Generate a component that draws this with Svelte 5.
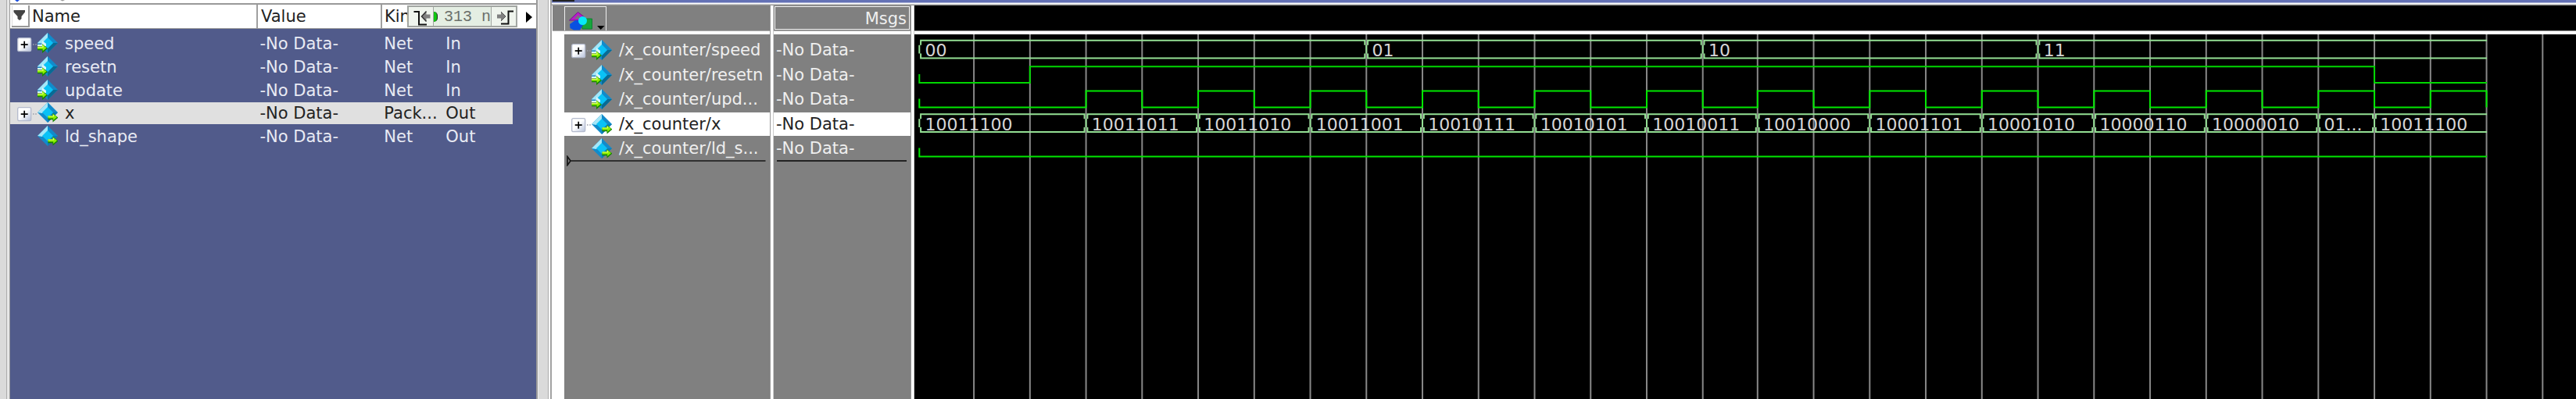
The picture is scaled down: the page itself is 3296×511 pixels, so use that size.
<script>
  const signals = [
    { name: 'speed', kind: 'Net', mode: 'In', bus: true, short: '/x_counter/speed' },
    { name: 'resetn', kind: 'Net', mode: 'In', short: '/x_counter/resetn' },
    { name: 'update', kind: 'Net', mode: 'In', short: '/x_counter/upd...' },
    { name: 'x', kind: 'Pack...', mode: 'Out', bus: true, selected: true, short: '/x_counter/x' },
    { name: 'ld_shape', kind: 'Net', mode: 'Out', short: '/x_counter/ld_s...' }
  ];

  // Wave area coordinates: x origin is the left edge of the black canvas.
  const start = 6.3;
  const tick = (n) => (n <= 13 ? 76.1 + n * 71.74 : 1078.8 + (n - 14) * 71.75);
  const grid = Array.from({ length: 29 }, (_, n) => tick(n));
  const end = tick(27) + 0.5;

  const bus = (top, changes) => {
    const b = top + 22.7;
    const edges = [start, ...changes.map(tick)];
    let d = '';
    edges.forEach((x, i) => {
      const l = x + 1.8;
      const r = i + 1 < edges.length ? edges[i + 1] - 2 : end;
      d += `M${l} ${top + 6}V${top}H${r}`;
      if (i + 1 < edges.length) d += `V${top + 6}M${r} ${b - 6}V${b}`;
      else d += `M${r} ${b}`;
      d += `H${l}V${b - 6}M${x} ${top + 6}V${b - 6}`;
    });
    return d;
  };

  const speedEdges = [7, 13, 19];
  const speedValues = ['00', '01', '10', '11'];
  const xEdges = [2, 4, 6, 8, 10, 12, 14, 16, 18, 20, 22, 24, 25];
  const xValues = ['10011100', '10011011', '10011010', '10011001', '10010111', '10010101', '10010011',
    '10010000', '10001101', '10001010', '10000110', '10000010', '01...', '10011100'];
  const labelX = (edges, i) => (i === 0 ? start : tick(edges[i - 1])) + 7.2;

  let update = `M${start} 82.5V93.5`;
  for (let n = 2; n <= 26; n += 2) update += `H${tick(n)}V72.5H${tick(n + 1)}V93.5`;
  const resetn = `M${start} 51V62H${tick(1)}V41.2H${tick(25)}V62H${end}`;
</script>

{#snippet port(mode)}
  <svg class="port" viewBox="0 0 26 26">
    <path d="M13 0L26 13L13 26L0 13Z" fill="#118bcb" />
    <path d="M13 0L13 7L6 14L0 13Z" fill="#a5e7f8" />
    <path d="M26 13L13 26L13 20L20 13Z" fill={mode === 'In' ? '#086b94' : '#0c7cb4'} />
    <path d="M13 6L20 13L13 20L6 13Z" fill="#0ac2f6" />
    {#if mode === 'In'}
      <path d="M0 13H6V10L11 14V17H0Z" fill="#d9f6fc" />
      <path d="M0 14.2H5.5" stroke="#1480c0" stroke-width="1.5" />
      <g transform="translate(0 13.8)">
        <path d="M0 4H6V0.5L13 6.3L6 12.2V8.5H0Z" fill="#168400" />
        <path d="M0 4H6V1L11.5 5.5L6.7 9.5V7H0Z" fill="#8cf000" />
        <path d="M0 4.6H7V2.5" stroke="#e0ff60" stroke-width="1.2" fill="none" />
      </g>
    {:else}
      <g transform="translate(13.500 13.4)">
        <path d="M0 4H6V0.5L13 6.3L6 12.2V8.8H0Z" fill="#168400" />
        <path d="M0 4H6V1L11.5 5.5L6.7 9.5V7H0Z" fill="#8cf000" />
        <path d="M0 4.6H7V2.5" stroke="#e0ff60" stroke-width="1.2" fill="none" />
      </g>
    {/if}
  </svg>
{/snippet}

{#snippet expander(show)}
  <span class="exp">
    {#if show}
      <svg viewBox="0 0 26 19">
        <defs>
          <linearGradient id="boxfill" x1="0" y1="0" x2="1" y2="1">
            <stop offset="0.45" stop-color="#fff" />
            <stop offset="1" stop-color="#b5c0da" />
          </linearGradient>
        </defs>
        <rect x="0.7" y="0.7" width="17" height="17" rx="1.8" fill="url(#boxfill)" stroke="#b4bbcd" stroke-width="1.3" />
        <path d="M4.7 9.2H13.7M9.2 4.7V13.7" stroke="#000" stroke-width="1.7" />
        <path d="M20 9H26" stroke="#9c9fac" stroke-width="1.5" stroke-dasharray="1.6 1.6" />
      </svg>
    {/if}
  </span>
{/snippet}

<div class="app">
  <div class="gutter"></div>
  <section class="objects">
    <div class="strip"><svg viewBox="0 0 80 4"><path d="M6 0H12L9 2.500Z" fill="#1c50e0" /><path d="M64 0H70L67 1.4Z" fill="#999" /></svg></div>
    <header class="ohead">
      <div class="sort"><svg viewBox="0 0 20 26"><path d="M2.500 6H17V8.500L12.500 14V17L10 19L7.500 17V14L2.500 8.500Z" fill="#444" /></svg></div>
      <div class="h name">Name</div>
      <div class="h value">Value</div>
      <div class="h kind">Kind</div>
      <div class="time">
        <span class="btn"><svg viewBox="0 0 32 26"><path d="M6.500 7H13V23.5H23" stroke="#111" stroke-width="2" fill="none" /><path d="M16.5 13L22.5 6.5V10.5H27.5V15.5H22.5V19.5Z" fill="#808080" /><path d="M22.5 6.5L16.5 13L22.5 19.5" stroke="#333" stroke-width="1.5" fill="none" /></svg></span>
        <span class="now"><i></i><b>313 n</b></span>
        <span class="btn"><svg viewBox="0 0 32 26"><path d="M12 22.5H21.5V6.5H28" stroke="#111" stroke-width="2" fill="none" /><path d="M18 13L12 7V10.5H7V15.5H12V19Z" fill="#808080" /><path d="M12 7L18 13L12 19" stroke="#555" stroke-width="1" fill="none" /></svg></span>
      </div>
      <svg class="next" viewBox="0 0 8 14"><path d="M0 0L8 7L0 14Z" fill="#000" /></svg>
    </header>
    <div class="orows">
      {#each signals as s}
        <div class="orow" class:selected={s.selected}>
          {@render expander(s.bus)}
          {@render port(s.mode)}
          <span class="name">{s.name}</span>
          <span class="value">-No Data-</span>
          <span class="kind">{s.kind}</span>
          <span>{s.mode}</span>
        </div>
      {/each}
    </div>
  </section>
  <div class="splitter"></div>

  <section class="wave">
    <div class="title"><span></span></div>
    <div class="panes">
      <div class="names">
        <div class="tools">
          <div class="tool">
            <svg viewBox="0 0 52 31">
              <path d="M5.5 17L16.5 6.5L26 14L20 17Z" fill="#b81cc8" stroke="#7a1090" stroke-width="1" />
              <path d="M12 15L17 10L20 15Z" fill="#777" />
              <path d="M21 15H34.5V28H22Z" fill="#16a63c" stroke="#108030" stroke-width="1" />
              <path d="M6 22L13 17H19L23 23L19 29.5H11L6.5 27Z" fill="#0a50e0" />
              <circle cx="22.5" cy="17.5" r="5.5" fill="#08e8f8" />
              <path d="M41 24H50.5L45.7 29Z" fill="#000" />
            </svg>
          </div>
        </div>
        <div class="wrows">
          {#each signals as s}
            <div class="wrow" class:selected={s.selected}>
              {@render expander(s.bus)}
              {@render port(s.mode)}
              <span>{s.short}</span>
            </div>
          {/each}
          <svg class="insert" viewBox="0 0 256 14"><path d="M1 1.5V12.5L5 7ZM5 7H254.500" stroke="#161616" stroke-width="1.7" fill="none" /></svg>
        </div>
      </div>
      <div class="sash"></div>
      <div class="msgs">
        <div class="mhead"><span>Msgs</span></div>
        <div class="mrows">
          {#each signals as s}
            <div class="wrow" class:selected={s.selected}><span>-No Data-</span></div>
          {/each}
          <div class="rule"></div>
        </div>
      </div>
      <div class="sash"></div>
      <div class="plot">
        <div class="ruler"></div>
        <svg class="canvas" width="2126" height="467" viewBox="0 0 2126 467">
          {#each grid as x}
            <path d="M{x} 0V467" stroke="#888" stroke-width="2" />
          {/each}
          <g fill="none" stroke-width="2">
            <path d={bus(7.7, speedEdges)} stroke="#94e094" />
            <path d={resetn} stroke="#00d800" />
            <path d={update} stroke="#00e800" />
            <path d={bus(102.3, xEdges)} stroke="#94e094" />
            <path d="M{start} 145.500V156.500H{end}" stroke="#00e800" />
          </g>
          {#each speedValues as v, i}
            <text x={labelX(speedEdges, i)} y="28">{v}</text>
          {/each}
          {#each xValues as v, i}
            <text x={labelX(xEdges, i)} y="122.500">{v}</text>
          {/each}
        </svg>
      </div>
    </div>
  </section>
</div>

<style>
  :global(body) { margin: 0; overflow: hidden; }
  .app {
    display: flex;
    width: 3296px;
    height: 511px;
    overflow: hidden;
    background: #dadada;
    font: 21px/30px "DejaVu Sans", sans-serif;
    white-space: nowrap;
  }
  .app * { box-sizing: border-box; }
  svg { display: block; }
  .gutter { flex: none; width: 12px; background: linear-gradient(90deg, #dadada 8px, #acacac 8px 9.500px, #e6e6e6 9.500px); }
  .objects { flex: none; width: 676px; display: flex; flex-direction: column; border: solid #999; border-width: 0 2px 0 1px; background: #515b8b; }
  .strip { height: 6px; background: #fff; border-bottom: 2px solid #999; }
  .strip svg { width: 80px; height: 4px; }
  .ohead { position: relative; display: flex; height: 31px; background: #fff; border-bottom: 1.500px solid #999; }
  .sort { width: 23px; height: 28px; margin: 1px 2px 0 2px; border: solid #999; border-width: 0 2px 2px 0; box-shadow: inset 1px 0 #ddd; }
  .sort svg { width: 20px; height: 26px; }
  .h { line-height: 30px; color: #222; }
  .h.name { width: 290px; padding-left: 1px; border-right: 2px solid #a0a0a0; }
  .h.value { width: 159px; padding-left: 4px; border-right: 2px solid #a0a0a0; }
  .h.kind { padding-left: 3px; }
  .time { position: absolute; left: 508px; top: 1px; width: 141px; height: 28px; display: flex; border: 2px solid #a2a6a2; background: #e4eee3; }
  .btn { flex: none; width: 32px; background: #eff4ed; }
  .btn:first-child { border-right: 1px solid #a2a6a2; }
  .btn:last-child { border-left: 1px solid #a2a6a2; }
  .btn svg { width: 32px; height: 26px; margin-top: -1px; }
  .now { flex: 1; display: flex; overflow: hidden; align-items: center; }
  .now i { flex: none; width: 5px; height: 13px; background: #10c810; border-right: 1.500px solid #222; border-radius: 0 6px 6px 0; }
  .now b { font: 20px/26px "Liberation Mono", monospace; color: #6b706b; margin-left: 8px; margin-top: 1px; }
  .next { position: absolute; left: 660px; top: 9px; width: 8px; height: 14px; }
  .orows { padding-top: 5px; }
  .orow { display: flex; width: 643px; height: 28px; margin-bottom: 1.800px; padding-left: 9px; line-height: 28.500px; color: #e9ebf4; }
  .orow.selected { background: #e0e0e0; color: #222; }
  .exp { flex: none; width: 26px; height: 19px; margin-top: 6px; }
  .exp svg { width: 26px; height: 19px; }
  .port { flex: none; width: 26px; height: 26px; }
  .orow .name { flex: none; width: 258.500px; padding-left: 9px; }
  .orow .value { flex: none; width: 158.800px; }
  .orow .kind { flex: none; width: 79px; }
  .splitter { flex: none; width: 16px; background: linear-gradient(90deg, #ececec 1.500px, #dadada 1.500px 13px, #aaa 13px 14.500px, #fff 14.500px); }
  .wave { flex: 1; min-width: 0; display: flex; flex-direction: column; border-left: 2px solid #a2a2a2; background: #fff; }
  .title { height: 7px; background: linear-gradient(#6371b5 3px, #fff 4px 5px, #969696 6px); }
  .title span { display: block; width: 28px; height: 2px; margin-left: 1px; background: #222; }
  .panes { flex: 1; display: flex; min-height: 0; }
  .names { flex: none; width: 279px; display: flex; flex-direction: column; padding-left: 1px; }
  .tools { height: 33px; padding-left: 15px; background: #808080; border-bottom: 1px solid #aaa; }
  .tool { width: 54px; height: 31px; margin-top: 1px; border: 1.500px solid #eee; border-bottom: 0; }
  .tool svg { width: 52px; height: 31px; }
  .wrows { position: relative; flex: 1; margin: 4px 0 0 15px; padding-top: 5px; background: #808080; }
  .wrow { display: flex; height: 30px; margin-bottom: 1.600px; padding-left: 9px; color: #efefef; line-height: 30.500px; }
  .wrow.selected { background: #fff; color: #222; }
  .wrow .exp { margin-top: 7px; }
  .wrow .port { margin-top: 2px; }
  .wrow .port + span { padding-left: 9px; }
  .insert { position: absolute; left: 3px; top: 155px; width: 256px; height: 14px; }
  .sash { flex: none; width: 5px; background: linear-gradient(90deg, #999 1px, #fff 1px 4px, #ccc 4px); }
  .msgs { flex: none; width: 175px; display: flex; flex-direction: column; }
  .mhead { height: 33px; background: #808080; border-bottom: 1px solid #aaa; padding: 1px 1px 0; color: #efefef; text-align: right; }
  .mhead span { display: block; height: 30px; padding-right: 3px; line-height: 31px; border: 1.500px solid #f4f4f4; }
  .mrows { position: relative; flex: 1; margin-top: 4px; padding-top: 5px; background: #808080; }
  .mrows .wrow { padding-left: 3px; }
  .rule { position: absolute; left: 4px; top: 161px; width: 166px; height: 2px; background: #222; }
  .plot { flex: 1; min-width: 0; display: flex; flex-direction: column; }
  .ruler { height: 33px; background: #000; border-bottom: 1px solid #999; }
  .canvas { margin-top: 4px; background: #000; }
  text { font: 22px "DejaVu Sans", sans-serif; fill: #d6d6d6; }
</style>
